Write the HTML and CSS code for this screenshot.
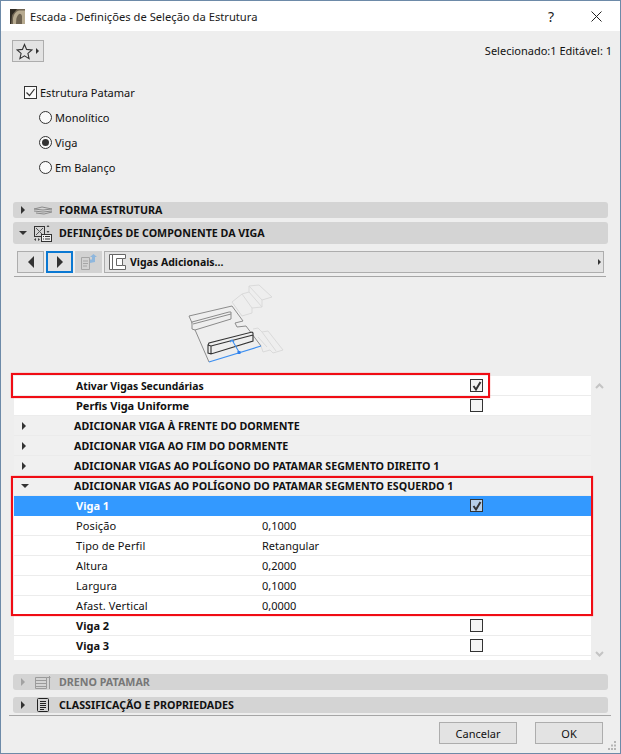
FILE: index.html
```html
<!DOCTYPE html>
<html lang="pt">
<head>
<meta charset="utf-8">
<title>Escada - Definições de Seleção da Estrutura</title>
<link rel="stylesheet" href="styles.css">
</head>
<body>
<div class="window">
  <header class="titlebar">
    <svg class="app-icon" width="15" height="15" viewBox="0 0 15 15"><rect width="15" height="15" fill="#6e6351"/><path d="M3 15V9Q4 3 9 1.500h6V15h-3V7Q11 4 9 5 6 7 6 15z" fill="#b8ab90"/><path d="M0 0h7L2 6 1 15H0z" fill="#2f2a22"/></svg>
    <span class="title-text">Escada - Definições de Seleção da Estrutura</span>
    <span class="title-help">?</span>
    <svg class="title-close" width="11" height="11" viewBox="0 0 11 11"><path d="M.5.5l10 10M10.5.5l-10 10" stroke="#222" fill="none"/></svg>
  </header>

  <div class="top-row">
    <button class="fav-btn">
      <svg width="17" height="17" viewBox="0 0 17 17"><path d="M8.500 1.500l2.100 4.900 5.300.5-4 3.500 1.200 5.200-4.600-2.700-4.600 2.700 1.200-5.200-4-3.500 5.300-.5z" fill="none" stroke="#333" stroke-width="1.100"/></svg>
      <span class="tri-right small"></span>
    </button>
    <span class="sel-info">Selecionado:1 Editável: 1</span>
  </div>

  <div class="options">
    <label class="opt-check"><span class="chk"><svg width="13" height="13" viewBox="0 0 13 13"><path d="M2.500 6.500l3 3 5-6.500" fill="none" stroke="#333" stroke-width="1.200"/></svg></span>Estrutura Patamar</label>
    <label class="opt-radio"><span class="radio"></span>Monolítico</label>
    <label class="opt-radio"><span class="radio on"></span>Viga</label>
    <label class="opt-radio"><span class="radio"></span>Em Balanço</label>
  </div>

  <section class="panel-head short first">
    <span class="tri-right"></span>
    <svg class="head-icon" width="18" height="14" viewBox="0 0 18 14"><path d="M0 6l8-2 10 2-9 1zM0 8l9 1 9-1M2 10l8 1 8-2" fill="none" stroke="#8a8a8a"/></svg>
    <span>FORMA ESTRUTURA</span>
  </section>
  <section class="panel-head tall">
    <span class="tri-down"></span>
    <svg class="head-icon" width="18" height="17" viewBox="0 0 18 17"><rect x=".5" y="1.500" width="10" height="10" fill="none" stroke="#333"/><path d="M2 3l7 7M9 3l-7 7" stroke="#555"/><path d="M12.500 2L14 0l1.500 2zM12.500 6L14 8l1.500-2z" fill="#444"/><rect x="7.500" y="9.500" width="10" height="7" fill="#eee" stroke="#333"/><path d="M9 11.500h1M11 11.500h5M9 14h1M11 14h5" stroke="#333"/><path d="M0 14.500l2-1.500v3zM6 14.500L4 13v3z" fill="#444"/></svg>
    <span>DEFINIÇÕES DE COMPONENTE DA VIGA</span>
  </section>

  <div class="toolbar">
    <button class="tool"><span class="tri-left big"></span></button>
    <button class="tool active"><span class="tri-right big"></span></button>
    <button class="tool disabled">
      <svg width="18" height="16" viewBox="0 0 18 16"><path d="M1.500 3.500h8v12h-8z" fill="none" stroke="#a6a6a6"/><path d="M3 7h5M3 9.500h5M3 12h4" stroke="#a6a6a6"/><path d="M10 9V5.500h2V3h-2l3.500-3L17 3h-2v5z" fill="#8fb7dd"/></svg>
    </button>
    <div class="dropdown">
      <svg width="17" height="16" viewBox="0 0 17 16"><path d="M.5.5h3v15h-3zM3.500.5h13v4h-3v7h3v4h-13zM7.500 4.500h6M7.500 11.500h6M7.500 4.500v7" fill="#fff" stroke="#666"/></svg>
      <span class="dd-label">Vigas Adicionais...</span>
      <span class="tri-right small dd-arrow"></span>
    </div>
  </div>

  <div class="preview">
    <svg width="130" height="85" viewBox="0 0 130 85">
      <g fill="none" stroke="#dadada" stroke-width="1">
        <path d="M62 22l10-8 7-2V6l10-1 13 12-10 3v7l-10 1v5l-10 3-10-14"/>
        <path d="M72 14l10 14M79 12l13 15M79 6l13 14"/>
        <path d="M83 49l5-1 4 4 6-1 15 19-10 3-3-3-7 2-2-6"/>
        <path d="M88 57l9 10M92 52l14 19"/>
      </g>
      <path d="M19 36l43-10 11 15-8 2 2 4 9-1 15 20M39 82L19 36" fill="none" stroke="#8c8c8c" stroke-width="1"/>
      <path d="M22 42l37-10 2 0v7l-36 11-3-1zM23 44l38-10" fill="#eee" stroke="#8a8a8a" stroke-width="1"/>
      <path d="M39 82l52-16" fill="none" stroke="#3d8ff0" stroke-width="1.200"/>
      <path d="M38 65l1-2 43-11 1 1v8l-42 13-3-1zM41 66l42-11M41 74v-8M38 65l3 1" fill="#eee" stroke="#333" stroke-width="1.100"/>
      <path d="M69 72l-7-12M60 62l2-2 2 2" fill="none" stroke="#3d8ff0" stroke-width="1.100"/>
      <rect x="67.500" y="71" width="3" height="3" fill="#2f80ee"/>
    </svg>
  </div>

  <div class="list-wrap">
    <div class="tree">
      <div class="row white"><span class="name bold tight">Ativar Vigas Secundárias</span><span class="val"></span><span class="cell-chk"><span class="box"><svg width="12" height="12" viewBox="0 0 12 12"><path d="M2.500 6l2.500 3.500L9.500 2" fill="none" stroke="#333" stroke-width="2"/></svg></span></span></div>
      <div class="row white"><span class="name bold">Perfis Viga Uniforme</span><span class="val"></span><span class="cell-chk"><span class="box"></span></span></div>
      <div class="row group"><span class="tri-right"></span><span class="grp-name">ADICIONAR VIGA À FRENTE DO DORMENTE</span></div>
      <div class="row group"><span class="tri-right"></span><span class="grp-name">ADICIONAR VIGA AO FIM DO DORMENTE</span></div>
      <div class="row group"><span class="tri-right"></span><span class="grp-name">ADICIONAR VIGAS AO POLÍGONO DO PATAMAR SEGMENTO DIREITO 1</span></div>
      <div class="row group open"><span class="tri-down"></span><span class="grp-name">ADICIONAR VIGAS AO POLÍGONO DO PATAMAR SEGMENTO ESQUERDO 1</span></div>
      <div class="row selected"><span class="name bold">Viga 1</span><span class="val"></span><span class="cell-chk"><span class="box"><svg width="12" height="12" viewBox="0 0 12 12"><path d="M2.500 6l2.500 3.500L9.500 2" fill="none" stroke="#333" stroke-width="2"/></svg></span></span></div>
      <div class="row white"><span class="name">Posição</span><span class="val">0,1000</span></div>
      <div class="row white"><span class="name">Tipo de Perfil</span><span class="val">Retangular</span></div>
      <div class="row white"><span class="name">Altura</span><span class="val">0,2000</span></div>
      <div class="row white"><span class="name">Largura</span><span class="val">0,1000</span></div>
      <div class="row white"><span class="name">Afast. Vertical</span><span class="val">0,0000</span></div>
      <div class="row white"><span class="name bold">Viga 2</span><span class="val"></span><span class="cell-chk"><span class="box"></span></span></div>
      <div class="row white"><span class="name bold">Viga 3</span><span class="val"></span><span class="cell-chk"><span class="box"></span></span></div>
      <div class="tree-tail"></div>
    </div>
    <div class="scroll">
      <svg width="9" height="6" viewBox="0 0 9 6"><path d="M1 5l3.500-3.500L8 5" fill="none" stroke="#c4c4c4" stroke-width="2"/></svg>
      <svg width="9" height="6" viewBox="0 0 9 6"><path d="M1 1l3.500 3.500L8 1" fill="none" stroke="#c4c4c4" stroke-width="2"/></svg>
    </div>
    <div class="mark mark-a"></div>
    <div class="mark mark-b"></div>
  </div>

  <section class="panel-head short off">
    <span class="tri-right"></span>
    <svg class="head-icon" width="16" height="13" viewBox="0 0 16 13"><path d="M.5 1.500h11v11H.5zM.5 4.500h11M.5 7.500h11M.5 10.500h11M14.500 0v13M11.500 1.500h4" fill="none" stroke="#9b9b9b"/></svg>
    <span>DRENO PATAMAR</span>
  </section>
  <section class="panel-head short last">
    <span class="tri-right"></span>
    <svg class="head-icon" width="12" height="14" viewBox="0 0 12 14"><path d="M.5 1.500q0-1 1-1h9q1 0 1 1v11q0 1-1 1h-9q-1 0-1-1z" fill="none" stroke="#222"/><path d="M3 3.500h6M3 5.500h6M3 7.500h6M3 9.500h6M3 11.500h4" stroke="#222"/></svg>
    <span>CLASSIFICAÇÃO E PROPRIEDADES</span>
  </section>

  <footer class="footer">
    <button class="btn cancel">Cancelar</button>
    <button class="btn ok">OK</button>
    <svg class="grip" width="10" height="10" viewBox="0 0 10 10"><path d="M7 0h2v2H7zM4 3.500h2v2H4zM7 3.500h2v2H7zM1 7h2v2H1zM4 7h2v2H4zM7 7h2v2H7z" fill="#b5b5b5"/></svg>
  </footer>
</div>
</body>
</html>
```
FILE: styles.css
```css
* { box-sizing: border-box; }
html, body { margin: 0; padding: 0; }
body {
  width: 621px; height: 754px; overflow: hidden;
  font-family: "Noto Sans", "Open Sans", sans-serif;
  font-size: 11px; color: #111;
}
.window {
  position: relative;
  width: 621px; height: 754px;
  background: #eeeeee;
  border: 1px solid #6d8aa8;
  display: flex; flex-direction: column;
}
.titlebar {
  height: 30px; flex: none;
  background: #fff;
  display: flex; align-items: center;
  padding: 0 0 0 9px;
}
.app-icon { margin-right: 5px; flex: none; }
.title-text { font-size: 11.200px; color: #1a1a1a; flex: 1; white-space: nowrap; }
.title-help { font-size: 14px; color: #222; margin-right: 37px; }
.title-close { margin-right: 18px; }

.top-row {
  height: 22px; margin: 9px 8px 0 11px; flex: none;
  display: flex; align-items: center; justify-content: space-between;
}
.fav-btn {
  width: 32px; height: 22px; padding: 0 0 0 3px;
  background: #e3e3e3; border: 1px solid #adadad;
  display: flex; align-items: center; gap: 3px;
}
.sel-info { position: relative; top: -1px; }

.options { margin: 18px 0 0 22px; display: flex; flex-direction: column; flex: none; }
.opt-check, .opt-radio { display: flex; align-items: center; height: 25px; }
.opt-radio { padding-left: 16px; }
.chk {
  width: 13px; height: 13px; border: 1px solid #333; background: #fafafa;
  margin: 0 3px 0 1px; display: flex;
}
.chk svg { margin: -1px; flex: none; }
.radio {
  width: 13px; height: 13px; border-radius: 50%;
  border: 1px solid #333; background: #fafafa; margin-right: 3px;
  display: flex; align-items: center; justify-content: center;
}
.radio.on::after { content: ""; width: 7px; height: 7px; border-radius: 50%; background: #333; }

.panel-head {
  margin: 0 12px; flex: none;
  background: #d4d4d4; border-radius: 3px;
  display: flex; align-items: center;
  font-weight: 700; font-size: 10.700px; color: #111;
  padding-left: 8px;
}
.panel-head.short { height: 16px; }
.panel-head.tall { height: 22px; margin-top: 4px; padding-left: 6px; }
.panel-head.first { margin-top: 22px; }
.panel-head.off { margin-top: 14px; color: #777; }
.panel-head.off .tri-right { border-left-color: #a2a2a2; }
.panel-head.last { margin-top: 7px; }
.head-icon { flex: none; margin: 0 7px 0 9px; }
.panel-head .tri-down + .head-icon { margin: 0 7px 0 7px; }
.panel-head.off .head-icon { margin: 0 8px 0 10px; }
.panel-head.last .head-icon { margin: 0 10px 0 12px; }

.tri-right { width: 0; height: 0; border-style: solid; border-width: 4px 0 4px 4px; border-color: transparent transparent transparent #333; flex: none; }
.tri-down { width: 0; height: 0; border-style: solid; border-width: 4px 4px 0 4px; border-color: #333 transparent transparent; flex: none; }
.tri-left { width: 0; height: 0; border-style: solid; border-width: 4px 4px 4px 0; border-color: transparent #333 transparent transparent; flex: none; }
.tri-right.small { border-width: 3.500px 0 3.500px 3.500px; }
.tri-right.big { border-width: 6px 0 6px 6px; }
.tri-left.big { border-width: 6px 6px 6px 0; }

.toolbar {
  margin: 7px 14px 0 13px; padding: 0 2px 3px 3px; flex: none;
  display: flex; gap: 2px;
  border-bottom: 1px solid #a6a6a6;
  box-sizing: content-box; height: 22px;
}
.tool {
  width: 27px; height: 22px; padding: 0;
  background: #e3e3e3; border: 1px solid #adadad;
  display: flex; align-items: center; justify-content: center;
}
.tool.active { border: 2px solid #0a78d2; }
.tool.disabled { background: #d2d2d2; border-color: #d2d2d2; }
.dropdown {
  flex: 1; height: 22px;
  background: #e3e3e3; border: 1px solid #adadad;
  display: flex; align-items: center; padding-left: 4px;
  font-weight: 700; font-size: 10.500px;
}
.dd-label { margin-left: 4px; flex: 1; }
.dd-arrow { margin-right: 2px; }

.preview { height: 99px; flex: none; padding: 3px 0 0 169px; }
.preview svg { display: block; }

.list-wrap {
  position: relative; flex: none;
  margin: 0 12px 0 13px; height: 284px;
  display: flex;
}
.tree { width: 577px; flex: none; background: #fff; display: flex; flex-direction: column; }
.row {
  height: 20px; flex: none;
  display: flex; align-items: center;
  border-bottom: 1px solid #ececec;
}
.row.white { background: #fff; }
.row.group { background: #f0f0f0; border-bottom-color: #ebebeb; padding-left: 8px; }
.row.group.open { padding-left: 7px; }
.row.selected { background: #3399ff; color: #fff; border-bottom-color: #3399ff; }
.name { width: 186px; margin-left: 62px; flex: none; white-space: nowrap; letter-spacing: .1px; }
.name.bold { font-weight: 700; letter-spacing: 0; }
.name.tight { font-size: 10.400px; }
.val { width: 208px; flex: none; }
.cell-chk { flex: none; display: flex; }
.box {
  width: 13px; height: 13px; border: 1px solid #333; background: #f4f4f4;
  display: flex; align-items: center; justify-content: center;
}
.selected .box { background: #b7cfe8; }
.box svg { flex: none; }
.grp-name { font-weight: 700; font-size: 10.700px; white-space: nowrap; margin-left: 48px; }
.open .grp-name { margin-left: 45px; }
.tree-tail { flex: 1; }
.scroll {
  flex: 1; display: flex; flex-direction: column; align-items: center;
  padding-top: 7px; gap: 262px;
}
.mark { position: absolute; border: 2px solid #f00c14; box-shadow: 0 0 1px #ff5a5a; pointer-events: none; }
.mark-a { left: -3px; top: -3px; width: 479px; height: 25px; }
.mark-b { left: -3px; top: 100px; width: 582px; height: 140px; }

.footer {
  position: relative; flex: 1;
  margin: 2px 9px 0 8px;
  border-top: 1px solid #a6a6a6;
  display: flex; align-items: flex-start; justify-content: flex-end;
  padding: 6px 8px 0 0; gap: 18px;
}
.btn {
  height: 22px; padding: 0;
  background: #e3e3e3; border: 1px solid #adadad;
  font: inherit; font-size: 11px; color: #111;
}
.btn.cancel { width: 78px; }
.btn.ok { width: 68px; }
.grip { position: absolute; right: -6px; bottom: 2px; }
```
